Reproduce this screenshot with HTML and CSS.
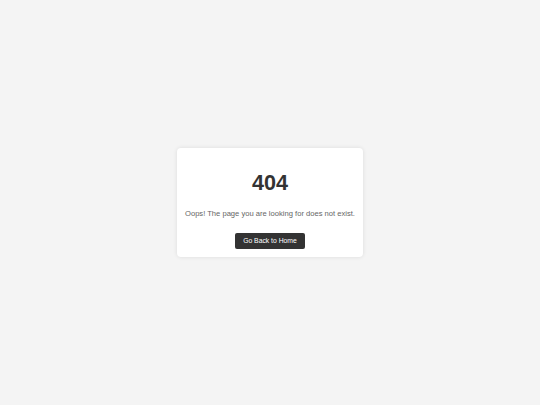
FILE: index.html
```html
<!DOCTYPE html>
<html lang="en">
<head>
<meta charset="utf-8">
<title>404 - Page Not Found</title>
<link rel="stylesheet" href="styles.css">
</head>
<body>
  <main class="page">
    <div class="card">
      <h1 class="code">404</h1>
      <p class="message">Oops! The page you are looking for does not exist.</p>
      <a class="home-btn" href="#">Go Back to Home</a>
    </div>
  </main>
</body>
</html>
```
FILE: styles.css
```css
html, body {
  margin: 0;
  padding: 0;
  height: 100%;
}

body {
  background: #f4f4f4;
  font-family: "Liberation Sans", Arial, sans-serif;
  color: #333;
}

.page {
  height: 100%;
  display: flex;
  align-items: center;
  justify-content: center;
}

.card {
  display: flex;
  flex-direction: column;
  align-items: center;
  background: #fff;
  border-radius: 4px;
  box-shadow: 0 0 4px rgba(0, 0, 0, 0.1);
  padding: 8px;
  text-align: center;
}

.code {
  margin: 15px 0 0;
  font-size: 21.6px;
  line-height: 24px;
  font-weight: bold;
  color: #333;
}

.message {
  margin: 14px 0 0;
  font-size: 7.6px;
  line-height: 10px;
  color: #666;
}

.home-btn {
  margin-top: 14px;
  padding: 3px 8px;
  font-size: 6.8px;
  line-height: 10px;
  color: #fff;
  background: #333;
  border-radius: 2px;
  text-decoration: none;
}
```
